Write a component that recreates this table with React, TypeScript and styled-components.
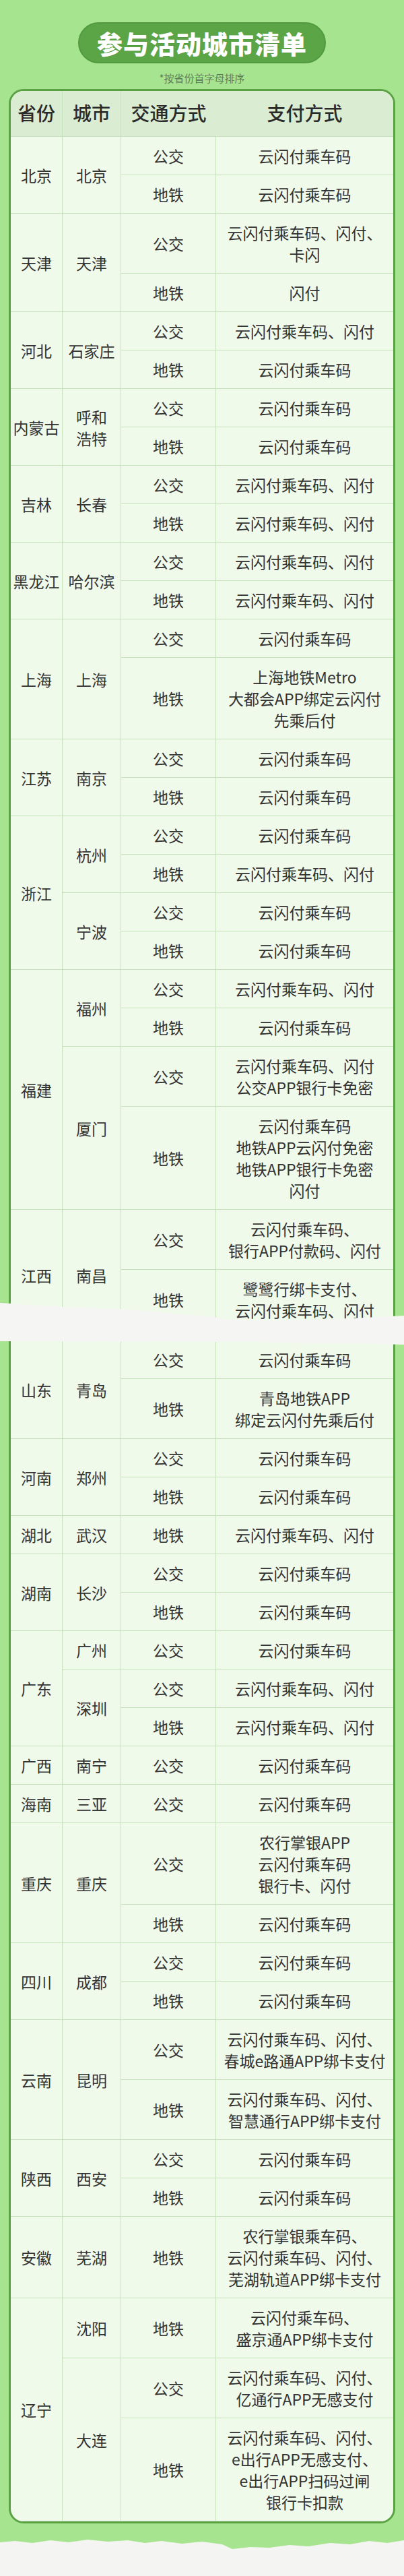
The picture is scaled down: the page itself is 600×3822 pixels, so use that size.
import React from 'react';
import styled, { createGlobalStyle } from 'styled-components';

const GlobalStyle = createGlobalStyle`
  html, body {
    margin: 0;
    padding: 0;
  }
  body {
    font-family: 'Noto Sans CJK SC', 'Noto Sans', sans-serif;
    color: #333;
  }
  * {
    box-sizing: border-box;
  }
`;

const Page = styled.div`
  position: relative;
  width: 600px;
  min-height: 3822px;
  background: #a6e48f;
  display: flex;
  flex-direction: column;
  overflow: hidden;
`;

const TitlePill = styled.div`
  align-self: center;
  width: 368px;
  height: 61px;
  margin-top: 33px;
  border-radius: 31px;
  background: #5ba547;
  border: 2px solid #529a3f;
  display: flex;
  align-items: center;
  justify-content: center;
  color: #fff;
  font-size: 38px;
  font-weight: 900;
  letter-spacing: 1px;
  text-shadow: 0 1px 0 rgba(0, 0, 0, 0.08);
`;

const Subtitle = styled.div`
  margin-top: 12px;
  text-align: center;
  font-size: 15px;
  line-height: 20px;
  color: #5f7f58;
`;

const Table = styled.div`
  margin: 6px 13px 0;
  border: 3px solid #5aa244;
  border-radius: 22px;
  overflow: hidden;
  display: grid;
  grid-template-columns: 77px 87px 141px 1fr;
  background: #f0faeb;
`;

const HeadCell = styled.div<{ $split?: boolean; $last?: boolean }>`
  position: relative;
  height: 68px;
  display: flex;
  align-items: center;
  justify-content: center;
  background: #daedd3;
  border-bottom: 1px solid #c6e2bc;
  border-right: ${p => (p.$last || p.$split ? 'none' : '1px solid #c6e2bc')};
  font-size: 28px;
  font-weight: 500;
  color: #2a2a2a;
  padding-bottom: 4px;

  ${p =>
    p.$split &&
    `
    &::after {
      content: '';
      position: absolute;
      left: 141px;
      right: -1px;
      top: 38px;
      bottom: 0;
      border-top: 1px solid #c6e2bc;
      border-left: 1px solid #c6e2bc;
      background: #dcefd6;
    }
  `}
`;

const HeadLabel = styled.span`
  position: relative;
  z-index: 1;
`;

const Cell = styled.div<{ $col: number; $span?: number; $extra?: number }>`
  grid-column: ${p => p.$col};
  grid-row: span ${p => p.$span ?? 1};
  display: flex;
  align-items: center;
  justify-content: center;
  text-align: center;
  white-space: pre-line;
  padding: 12px 2px ${p => 12 + (p.$extra ?? 0)}px;
  font-size: 23px;
  line-height: 32px;
  color: #333;
  border-bottom: 1px solid #c6e2bc;
  border-right: ${p => (p.$col < 4 ? '1px solid #c6e2bc' : 'none')};
`;

const Province = styled(Cell)`
  letter-spacing: 0;
`;

const TornBand = styled.svg`
  position: absolute;
  left: 0;
  top: 1928px;
  width: 600px;
  height: 72px;
`;

const Footer = styled.div`
  flex: 1;
  min-height: 70px;
  display: flex;
  flex-direction: column;
  justify-content: flex-end;
`;

const FooterPaper = styled.svg`
  display: block;
  width: 600px;
  height: 58px;
`;

type Mode = { mode: string; pay: string; extra?: number };
type City = { name: string; modes: Mode[] };
type ProvinceData = { name: string; cities: City[] };

const QR = '云闪付乘车码';
const QRF = '云闪付乘车码、闪付';

const data: ProvinceData[] = [
  { name: '北京', cities: [{ name: '北京', modes: [{ mode: '公交', pay: QR }, { mode: '地铁', pay: QR }] }] },
  {
    name: '天津',
    cities: [{ name: '天津', modes: [{ mode: '公交', pay: '云闪付乘车码、闪付、\n卡闪' }, { mode: '地铁', pay: '闪付' }] }],
  },
  { name: '河北', cities: [{ name: '石家庄', modes: [{ mode: '公交', pay: QRF }, { mode: '地铁', pay: QR }] }] },
  { name: '内蒙古', cities: [{ name: '呼和\n浩特', modes: [{ mode: '公交', pay: QR }, { mode: '地铁', pay: QR }] }] },
  { name: '吉林', cities: [{ name: '长春', modes: [{ mode: '公交', pay: QRF }, { mode: '地铁', pay: QRF }] }] },
  { name: '黑龙江', cities: [{ name: '哈尔滨', modes: [{ mode: '公交', pay: QRF }, { mode: '地铁', pay: QRF }] }] },
  {
    name: '上海',
    cities: [
      {
        name: '上海',
        modes: [
          { mode: '公交', pay: QR },
          { mode: '地铁', pay: '上海地铁Metro\n大都会APP绑定云闪付\n先乘后付' },
        ],
      },
    ],
  },
  { name: '江苏', cities: [{ name: '南京', modes: [{ mode: '公交', pay: QR }, { mode: '地铁', pay: QR }] }] },
  {
    name: '浙江',
    cities: [
      { name: '杭州', modes: [{ mode: '公交', pay: QR }, { mode: '地铁', pay: QRF }] },
      { name: '宁波', modes: [{ mode: '公交', pay: QR }, { mode: '地铁', pay: QR }] },
    ],
  },
  {
    name: '福建',
    cities: [
      { name: '福州', modes: [{ mode: '公交', pay: QRF }, { mode: '地铁', pay: QR }] },
      {
        name: '厦门',
        modes: [
          { mode: '公交', pay: '云闪付乘车码、闪付\n公交APP银行卡免密' },
          { mode: '地铁', pay: '云闪付乘车码\n地铁APP云闪付免密\n地铁APP银行卡免密\n闪付' },
        ],
      },
    ],
  },
  {
    name: '江西',
    cities: [
      {
        name: '南昌',
        modes: [
          { mode: '公交', pay: '云闪付乘车码、\n银行APP付款码、闪付' },
          { mode: '地铁', pay: '鹭鹭行绑卡支付、\n云闪付乘车码、闪付', extra: 16 },
        ],
      },
    ],
  },
  {
    name: '山东',
    cities: [
      { name: '青岛', modes: [{ mode: '公交', pay: QR }, { mode: '地铁', pay: '青岛地铁APP\n绑定云闪付先乘后付' }] },
    ],
  },
  { name: '河南', cities: [{ name: '郑州', modes: [{ mode: '公交', pay: QR }, { mode: '地铁', pay: QR }] }] },
  { name: '湖北', cities: [{ name: '武汉', modes: [{ mode: '地铁', pay: QRF }] }] },
  { name: '湖南', cities: [{ name: '长沙', modes: [{ mode: '公交', pay: QR }, { mode: '地铁', pay: QR }] }] },
  {
    name: '广东',
    cities: [
      { name: '广州', modes: [{ mode: '公交', pay: QR }] },
      { name: '深圳', modes: [{ mode: '公交', pay: QRF }, { mode: '地铁', pay: QRF }] },
    ],
  },
  { name: '广西', cities: [{ name: '南宁', modes: [{ mode: '公交', pay: QR }] }] },
  { name: '海南', cities: [{ name: '三亚', modes: [{ mode: '公交', pay: QR }] }] },
  {
    name: '重庆',
    cities: [
      { name: '重庆', modes: [{ mode: '公交', pay: '农行掌银APP\n云闪付乘车码\n银行卡、闪付' }, { mode: '地铁', pay: QR }] },
    ],
  },
  { name: '四川', cities: [{ name: '成都', modes: [{ mode: '公交', pay: QR }, { mode: '地铁', pay: QR }] }] },
  {
    name: '云南',
    cities: [
      {
        name: '昆明',
        modes: [
          { mode: '公交', pay: '云闪付乘车码、闪付、\n春城e路通APP绑卡支付' },
          { mode: '地铁', pay: '云闪付乘车码、闪付、\n智慧通行APP绑卡支付' },
        ],
      },
    ],
  },
  { name: '陕西', cities: [{ name: '西安', modes: [{ mode: '公交', pay: QR }, { mode: '地铁', pay: QR }] }] },
  {
    name: '安徽',
    cities: [
      { name: '芜湖', modes: [{ mode: '地铁', pay: '农行掌银乘车码、\n云闪付乘车码、闪付、\n芜湖轨道APP绑卡支付' }] },
    ],
  },
  {
    name: '辽宁',
    cities: [
      { name: '沈阳', modes: [{ mode: '地铁', pay: '云闪付乘车码、\n盛京通APP绑卡支付' }] },
      {
        name: '大连',
        modes: [
          { mode: '公交', pay: '云闪付乘车码、闪付、\n亿通行APP无感支付' },
          { mode: '地铁', pay: '云闪付乘车码、闪付、\ne出行APP无感支付、\ne出行APP扫码过闸\n银行卡扣款' },
        ],
      },
    ],
  },
];

const App = () => {
  return (
    <>
      <GlobalStyle />
      <Page>
        <TitlePill>参与活动城市清单</TitlePill>
        <Subtitle>*按省份首字母排序</Subtitle>
        <Table>
          <HeadCell>
            <HeadLabel>省份</HeadLabel>
          </HeadCell>
          <HeadCell>
            <HeadLabel>城市</HeadLabel>
          </HeadCell>
          <HeadCell $split>
            <HeadLabel>交通方式</HeadLabel>
          </HeadCell>
          <HeadCell $last>
            <HeadLabel>支付方式</HeadLabel>
          </HeadCell>
          {data.map(prov => {
            const total = prov.cities.reduce((n, c) => n + c.modes.length, 0);
            return (
              <React.Fragment key={prov.name}>
                <Province $col={1} $span={total}>
                  {prov.name}
                </Province>
                {prov.cities.map(city => (
                  <React.Fragment key={city.name}>
                    <Cell $col={2} $span={city.modes.length}>
                      {city.name}
                    </Cell>
                    {city.modes.map(m => (
                      <React.Fragment key={m.mode}>
                        <Cell $col={3} $extra={m.extra}>
                          {m.mode}
                        </Cell>
                        <Cell $col={4} $extra={m.extra}>
                          {m.pay}
                        </Cell>
                      </React.Fragment>
                    ))}
                  </React.Fragment>
                ))}
              </React.Fragment>
            );
          })}
        </Table>
        <Footer>
          <FooterPaper viewBox='0 0 600 58' preserveAspectRatio='none'>
            <path
              d='M0 8 L22 6 L48 9 L75 5 L102 8 L130 4 L160 7 L190 5 L215 9 L240 6 L270 10 L300 7 L330 11 L345 18 L372 15 L400 16 L430 12 L458 14 L490 9 L520 11 L548 6 L575 9 L600 5 L600 58 L0 58 Z'
              fill='#f4f5f2'
            />
          </FooterPaper>
        </Footer>
        <TornBand viewBox='0 0 600 72' preserveAspectRatio='none'>
          <path
            d='M0 5 L30 7 L60 9 L77 10 L110 12 L150 13 L190 15 L230 18 L270 22 L300 24 L344 30 L400 31 L478 30 L520 28 L560 26 L600 24 L600 67 L560 66 L520 65 L470 65 L430 64 L380 63 L300 63 L240 62 L200 63 L150 62 L120 63 L80 62 L40 62 L0 62 Z'
            fill='#f5f5f4'
          />
        </TornBand>
      </Page>
    </>
  );
};

export default App;
